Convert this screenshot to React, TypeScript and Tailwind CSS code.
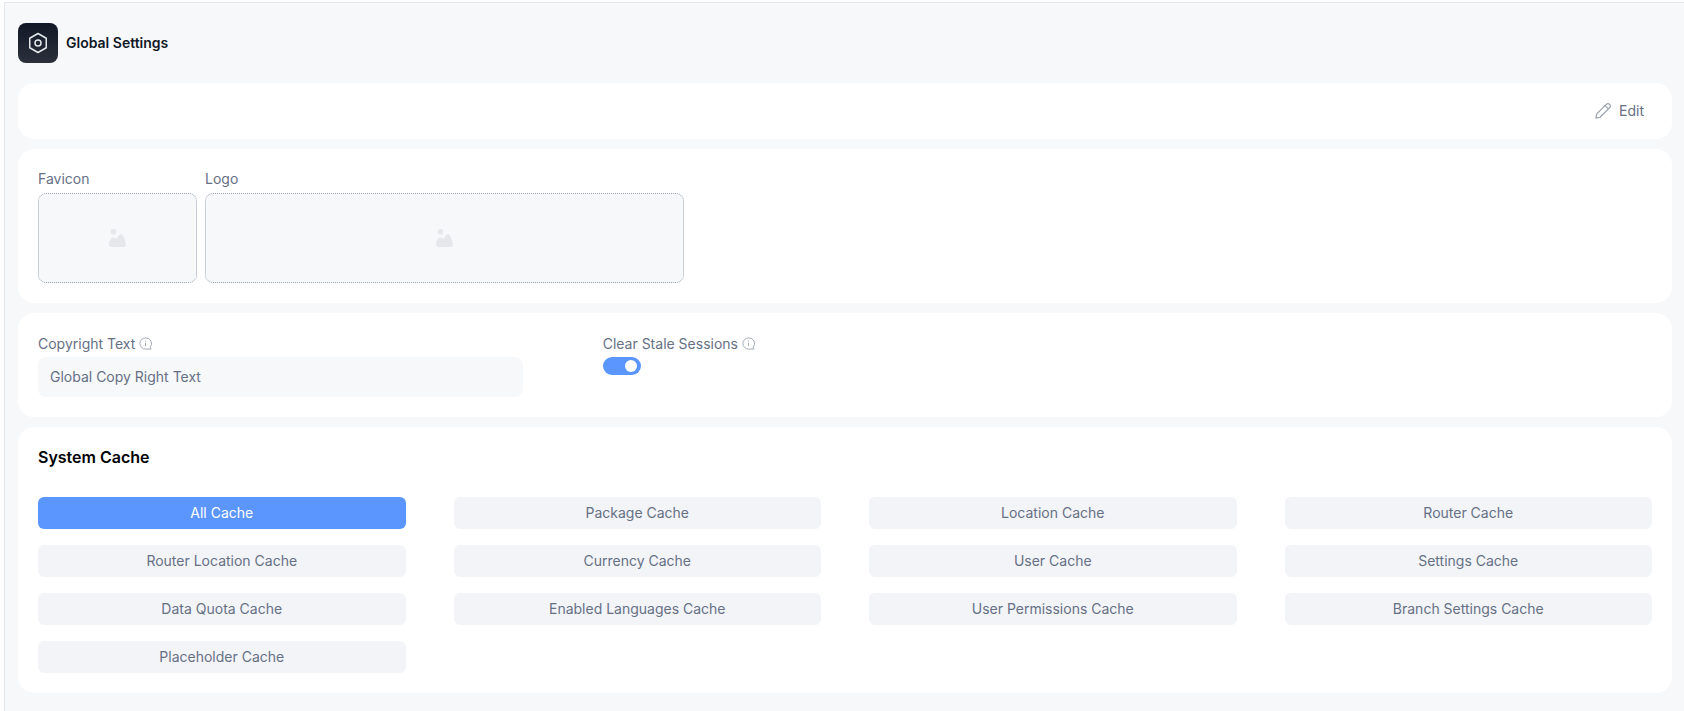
const cacheButtons = [
  "All Cache",
  "Package Cache",
  "Location Cache",
  "Router Cache",
  "Router Location Cache",
  "Currency Cache",
  "User Cache",
  "Settings Cache",
  "Data Quota Cache",
  "Enabled Languages Cache",
  "User Permissions Cache",
  "Branch Settings Cache",
  "Placeholder Cache",
]

function InfoIcon() {
  return (
    <svg width="13" height="13" viewBox="0 0 14 14" fill="none" stroke="#9ca3af" strokeWidth="1" className="ml-1">
      <path d="M7 1a6 6 0 1 0 0 12h6l-1-2A6 6 0 0 0 7 1Z" />
      <path d="M7 6.200v3.600M7 4v1" />
    </svg>
  )
}

function ImageIcon() {
  return (
    <svg width="17" height="18" viewBox="0 0 17 18" fill="#e5e7eb">
      <circle cx="4.500" cy="2.800" r="2.800" />
      <path d="M3 18C1 18 0 17 0 15.500 0 12.500 2 8.500 4 8.500c1.500 0 2.500 1 3.500 1.500C8.500 9 10 5 12 5s3.500 4 4.500 8.500c.7 3 0 4.500-2.500 4.500Z" />
    </svg>
  )
}

function ImageBox({ label, className }: { label: string; className: string }) {
  return (
    <div>
      <div className="h-[20px] mb-[4px] text-sm leading-5 text-[#667085]">{label}</div>
      <div className={`${className} h-[90px] rounded-lg border border-dotted border-[#9ca3af] bg-[#f7f8fa] flex items-center justify-center`}>
        <ImageIcon />
      </div>
    </div>
  )
}

export default function App() {
  return (
    <div className="min-h-[711px] bg-white pt-[2px] pl-[4px] font-['Inter',sans-serif]">
      <div className="min-h-[709px] bg-[#f7f8fa] border-t border-l border-[#e5e7eb] pl-[13px] pr-[12px]">
        {/* Заголовок */}
        <div className="flex items-center gap-2 py-5">
          <div className="w-10 h-10 rounded-lg bg-gradient-to-b from-[#111827] to-[#2b303b] flex items-center justify-center">
            <svg width="24" height="24" viewBox="0 0 24 24" fill="none" stroke="#e5e7eb" strokeWidth="1.5" strokeLinejoin="round">
              <path d="M12 2.500l8.250 4.750v9.500L12 21.500l-8.250-4.750v-9.500Z" />
              <circle cx="12" cy="12" r="3" />
            </svg>
          </div>
          <span className="text-sm font-semibold text-[#111827]">Global Settings</span>
        </div>

        <div className="flex flex-col gap-[10px]">
          <div className="h-14 bg-white rounded-2xl flex items-center justify-end pr-7">
            <button className="flex items-center gap-[6px] text-sm text-[#667085]">
              <svg width="20" height="20" viewBox="0 0 24 24" fill="none" stroke="#9ca3af" strokeWidth="1.500" strokeLinecap="round" strokeLinejoin="round">
                <path d="M3.500 20.500l1-5L16 4a2.800 2.800 0 0 1 4 4L8.500 19.500Z" />
                <path d="M14.500 5.500l4 4" />
              </svg>
              Edit
            </button>
          </div>

          <div className="h-[154px] bg-white rounded-2xl px-5 pt-5 flex gap-2">
            <ImageBox label="Favicon" className="w-[159px]" />
            <ImageBox label="Logo" className="w-[479px]" />
          </div>

          <div className="h-[104px] bg-white rounded-2xl px-5 pt-5 grid grid-cols-3 gap-x-20">
            <div>
              <div className="h-[21px] mb-[3px] flex items-center text-sm text-[#667085]">
                Copyright Text
                <InfoIcon />
              </div>
              <div className="h-10 rounded-lg bg-[#f7f8fa] px-3 flex items-center text-sm text-[#667085]">Global Copy Right Text</div>
            </div>
            <div>
              <div className="h-[21px] mb-[3px] flex items-center text-sm text-[#667085]">
                Clear Stale Sessions
                <InfoIcon />
              </div>
              <div className="w-[38px] h-[18px] rounded-full bg-[#5b96ff] flex items-center justify-end pr-[4px]">
                <div className="w-[12px] h-[12px] rounded-full bg-white" />
              </div>
            </div>
          </div>

          <div className="bg-white rounded-2xl p-5">
            <h2 className="h-5 text-base leading-5 font-semibold text-black">System Cache</h2>
            <div className="mt-[30px] grid grid-cols-4 gap-x-12 gap-y-4">
              {cacheButtons.map((name, i) => (
                <button
                  key={name}
                  className={
                    i === 0
                      ? "h-8 rounded-md bg-[#5b96ff] text-sm text-white"
                      : "h-8 rounded-md bg-[#f3f4f7] text-sm text-[#667085]"
                  }
                >
                  {name}
                </button>
              ))}
            </div>
          </div>
        </div>
      </div>
    </div>
  )
}
